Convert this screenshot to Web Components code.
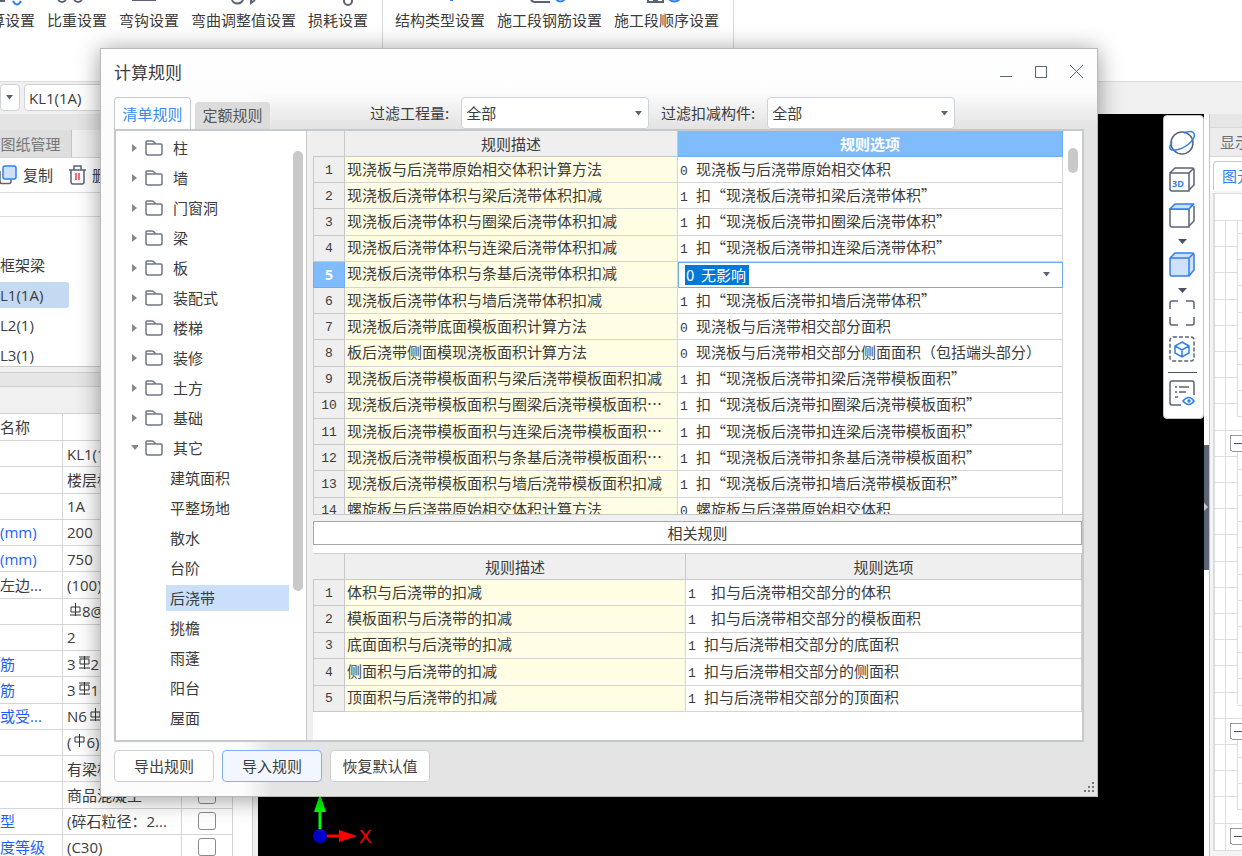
<!DOCTYPE html>
<html lang="zh-CN">
<head>
<meta charset="utf-8">
<title>计算规则</title>
<style>
  html, body { margin: 0; height: 100%; }
  body {
    --ui: "Noto Sans CJK SC", sans-serif;
    --latin: "Open Sans", "Noto Sans CJK SC", sans-serif;
    --line: #d5d5d5;
    --ink: #3c3c3c;
    --blue: #2f80ed;
    font: 15px/20px var(--ui);
    color: var(--ink);
    overflow: hidden;
    background: #fff;
  }
</style>
</head>
<body>
<app-shell></app-shell>

<script>
function define(name, html, setup) {
  const template = document.createElement('template');
  template.innerHTML = `<style>
    *, *::before, *::after { box-sizing: border-box; }
    button, select, input { font: inherit; color: inherit; margin: 0; }
    svg { display: block; flex: none; fill: none; stroke: #5b6474; stroke-width: 1.5; }
  </style>` + html;
  customElements.define(name, class extends HTMLElement {
    constructor() {
      super();
      this.attachShadow({ mode: 'open' }).append(template.content.cloneNode(true));
    }
    connectedCallback() { if (setup) setup(this.shadowRoot, this); }
  });
}

/* ---------- shared controls ---------- */

define('combo-box', `
<style>
  :host { display: flex; align-items: center; }
  label { white-space: nowrap; margin-right: 12px; }
  .box { flex: 1; display: grid; align-items: center; height: 100%; }
  select {
    grid-area: 1 / 1; width: 100%; height: 100%; appearance: none; outline: none;
    border: 1px solid #cfd2d6; border-radius: 4px; background: #fff; padding: 0 4px;
  }
  svg { grid-area: 1 / 1; justify-self: end; margin-right: 7px; fill: #5b6474; stroke: none; pointer-events: none; }
</style>
<label for="s"></label>
<div class="box">
  <select id="s"><option></option></select>
  <svg width="7" height="5"><path d="M0 0h7L3.500 4.500z"/></svg>
</div>`, (root, host) => {
  const label = root.querySelector('label');
  label.textContent = host.getAttribute('label') || '';
  if (!label.textContent) { label.remove(); root.querySelector('select').ariaLabel = host.getAttribute('name') || '选择'; }
  root.querySelector('option').textContent = host.getAttribute('value') || '';
});

define('tool-button', `
<style>
  :host { display: block; }
  button { width: 100%; height: 100%; border: 1px solid #cfcfcf; border-radius: 4px; background: #fff; padding: 0; }
  :host([primary]) button { border-color: #84aef5; background: #f2f7ff; }
</style>
<button type="button"><slot></slot></button>`);

/* ---------- ribbon and context bar ---------- */

define('ribbon-item', `
<style>
  :host { display: block; }
  button { display: flex; flex-direction: column; align-items: center; border: 0; background: none; padding: 0; white-space: nowrap; }
  .pic { height: 10px; }
</style>
<button type="button"><span class="pic"><slot name="icon"></slot></span><span><slot></slot></span></button>`);

define('app-ribbon', `
<style>
  :host { display: flex; height: 82px; background: #fff; overflow: hidden; border-bottom: 1px solid #dcdcdc; }
  section { display: flex; gap: 12px; padding: 0 14px 0 12px; border-right: 1px solid #d9d9d9; }
  .first { margin-left: -22px; }
  .b { stroke: var(--blue); }
  svg { stroke-width: 2; }
</style>
<section class="first">
  <ribbon-item><svg slot="icon" width="45" height="6"><path d="M8 1h7"/><path class="b" d="M23 1q4 7 8 0"/></svg>算设置</ribbon-item>
  <ribbon-item><svg slot="icon" width="60" height="6"><path d="M11 -2a4 4 0 0 0 8 0M27 -2a4 4 0 0 0 8 0"/></svg>比重设置</ribbon-item>
  <ribbon-item><svg slot="icon" width="60" height="6"><path d="M13 0h24"/></svg>弯钩设置</ribbon-item>
  <ribbon-item><svg slot="icon" width="105" height="6"><path d="M41 -1a5 4 0 0 0 11 0M60 0v3l4-3"/></svg>弯曲调整值设置</ribbon-item>
  <ribbon-item><svg slot="icon" width="60" height="6"><circle cx="40" cy="1" r="4"/></svg>损耗设置</ribbon-item>
</section>
<section>
  <ribbon-item><svg slot="icon" width="90" height="6"><path class="b" d="M55 0h3"/></svg>结构类型设置</ribbon-item>
  <ribbon-item><svg slot="icon" width="105" height="6"><path d="M34 -2q0 4 4 4h15"/><path class="b" d="M59 -1q4 5 9 0"/></svg>施工段钢筋设置</ribbon-item>
  <ribbon-item><svg slot="icon" width="105" height="6"><path d="M34 -1v3h15v-3M39 0h5"/><path class="b" d="M55 -1q5 5 11 0"/></svg>施工段顺序设置</ribbon-item>
</section>`);

define('context-bar', `
<style>
  :host { display: flex; gap: 4px; height: 32px; padding: 2px 0 3px; background: #f0f0f0; font-family: var(--latin); }
  .storey { width: 20px; }
  .member { width: 140px; }
</style>
<combo-box class="storey" name="楼层"></combo-box>
<combo-box class="member" name="构件" value="KL1(1A)"></combo-box>`);

/* ---------- left panel ---------- */

define('component-list', `
<style>
  :host { display: block; font-family: var(--latin); background: #fff; border-bottom: 1px solid #c9c9c9; }
  .tabs { display: flex; height: 28px; background: #f0f0f0; border-bottom: 1px solid #d5d5d5; }
  .tabs button { border: 0; border-right: 1px solid #c4c4c4; background: #dedede; color: #777; width: 72px; padding: 0 10px 0 0; }
  .tools { display: flex; align-items: center; height: 35px; gap: 16px; border-bottom: 1px solid #dcdcdc; }
  .tools button { display: flex; align-items: center; gap: 6px; border: 0; background: none; padding: 0; white-space: nowrap; }
  .search { height: 24px; border-bottom: 1px solid #dcdcdc; }
  ul { list-style: none; margin: 0; padding: 35px 0 0; }
  li { height: 26px; line-height: 26px; margin-bottom: 4px; width: 69px; white-space: nowrap; }
  li:last-child { margin-bottom: 0; height: 22px; }
  li[aria-selected] { background: #c3daf2; border-radius: 0 3px 3px 0; }
</style>
<div class="tabs"><button type="button">图纸管理</button></div>
<div class="tools">
  <button type="button"><svg width="17" height="20"><path d="M0 6v11q0 1.500 2 1.500h7q2 0 2-2v-2"/><rect x="3" y="1" width="13" height="13" rx="2" fill="#cfe1fa" stroke="#2f80ed"/></svg>复制</button>
  <button type="button"><svg width="17" height="20"><path d="M0 5h17M5 5V1h7v4M2 5v12q0 2 2 2h9q2 0 2-2V5"/><path d="M7 8v7M10 8v7" stroke="#e04050"/></svg>删除</button>
</div>
<div class="search"></div>
<ul role="listbox" aria-label="构件">
  <li role="option">框架梁</li>
  <li role="option" aria-selected="true">L1(1A)</li>
  <li role="option">L2(1)</li>
  <li role="option">L3(1)</li>
</ul>`);

const bar = (top) => `<svg width="13" height="13" viewBox="0 0 13 13"><path d="M6.500 0v13M2 ${top ? 3 : 4}h9v5H2z${top === 2 ? 'M1 1h11' : ''}${top === 3 ? '' : 'M1 12h11'}" stroke="#333" stroke-width="1"/></svg>`;

const properties = [
  ['', 'KL1(1A)'], ['', '楼层框架梁'], ['', '1A'], ['(mm)', '200', 1], ['(mm)', '750', 1],
  ['左边...', '(100)'], ['', bar(0) + '8@100'], ['', '2'], ['筋', '3' + bar(2) + '20', 1],
  ['筋', '3' + bar(2) + '16', 1], ['或受...', 'N6' + bar(0) + '12', 1], ['', '(' + bar(3) + '6)'],
  ['', '有梁板'], ['', '商品混凝土'], ['型', '(碎石粒径：2...', 1], ['度等级', '(C30)', 1]
];

define('property-table', `
<style>
  :host { display: block; font-family: var(--latin); background: #fff; border-right: 1px solid #d0d0d0; }
  table { table-layout: fixed; border-collapse: separate; border-spacing: 0; width: 233px; height: 447px; }
  thead th { height: 27px; }
  th, td { padding: 0 0 0 4px; border: 0 solid var(--line); border-width: 0 1px 1px 0; font-weight: 400; white-space: nowrap; overflow: hidden; text-align: left; }
  th:first-child, td:first-child { padding: 0; }
  th.mid { text-align: center; }
  .key { color: #1f5fff; }
  svg { display: inline-block; margin-left: 2px; vertical-align: 1px; }
  input { display: block; margin: auto; appearance: none; width: 18px; height: 18px; border: 1px solid #8a8a8a; border-radius: 3px; background: #fff; }
  td:last-child { padding: 0; }
</style>
<table>
  <colgroup><col style="width:63px"><col style="width:119px"><col style="width:51px"></colgroup>
  <thead><tr><th>名称</th><th class="mid">属性值</th><th></th></tr></thead>
  <tbody></tbody>
</table>`, (root) => {
  root.querySelector('tbody').innerHTML = properties.map(([k, v, key]) =>
    `<tr><td class="${key ? 'key' : ''}">${k}</td><td>${v}</td><td><input type="checkbox" aria-label="附加"></td></tr>`).join('');
});

define('side-panel', `
<style>
  :host { display: flex; flex-direction: column; width: 258px; padding-right: 5px; background: #f0f0f0; overflow: hidden; }
  .caption { flex: none; height: 16px; background: #e4e4e4; }
  .split { flex: none; height: 15px; margin-top: 5px; background: #e6e6e6; border: 1px solid #d0d0d0; border-width: 1px 0; }
  .gap { flex: none; height: 27px; border-bottom: 1px solid var(--line); }
  component-list { flex: none; height: 237px; }
</style>
<div class="caption"></div>
<component-list></component-list>
<div class="split"></div>
<div class="gap"></div>
<property-table></property-table>`);

/* ---------- model canvas ---------- */

define('view-toolbar', `
<style>
  :host { display: flex; flex-direction: column; align-items: center; width: 41px; padding: 14px 3px 2px 0; background: #fff; border: 1px solid #c4c4c4; border-radius: 4px; }
  button { border: 0; background: none; padding: 0; height: 26px; margin-bottom: 10px; }
  .menu { margin-bottom: 8px; }
  .arrow { height: 10px; margin-bottom: 5px; display: grid; place-items: center; }
  .arrow svg { fill: #4a5262; stroke: none; }
  .blue { stroke: #2f80ed; }
  hr { width: 29px; border: 0; border-top: 1px solid #4a5262; margin: 0 0 7px; }
  text { font: 700 9px/10px "Open Sans", sans-serif; fill: #2f80ed; stroke: none; }
</style>
<button type="button" aria-label="动态观察"><svg width="28" height="26"><circle cx="14" cy="13" r="11"/><path class="blue" d="M4 12C-1 20 3 21 10 19.500C20 17 28 8 26 3.500C25 1 20 1 16 3"/></svg></button>
<button type="button" aria-label="三维"><svg width="26" height="26"><path d="M1 7h19v18H3q-2 0-2-2zM1 7l5-5h17q2 0 2 2v15l-5 5M20 7l5-5"/><text x="3" y="21">3D</text></svg></button>
<button type="button" class="menu" aria-label="俯视"><svg width="26" height="26"><path d="M1 7h19v18H3q-2 0-2-2zM25 4v15l-5 5"/><path class="blue" fill="#cfe1fa" d="M1 7l5-5h18l-4 5zM20 7l5-5"/></svg></button>
<button type="button" class="arrow" aria-label="更多视图"><svg width="9" height="5"><path d="M0 0h9L4.500 5z"/></svg></button>
<button type="button" class="menu" aria-label="着色"><svg width="26" height="26"><path class="blue" fill="#cfe1fa" d="M1 7l5-5h17q2 0 2 2v15l-5 6H3q-2 0-2-2zM1 7h19v18M20 7l5-5"/></svg></button>
<button type="button" class="arrow" aria-label="更多样式"><svg width="9" height="5"><path d="M0 0h9L4.500 5z"/></svg></button>
<button type="button" aria-label="全屏"><svg width="26" height="26"><path d="M1 9V3q0-2 2-2h6M17 1h6q2 0 2 2v6M25 17v6q0 2-2 2h-6M9 25H3q-2 0-2-2v-6"/></svg></button>
<button type="button" aria-label="隔离"><svg width="26" height="26"><rect x="1" y="1" width="24" height="24" rx="3" stroke-dasharray="4 2"/><path class="blue" d="M13 6l7 4v7l-7 4-7-4v-7zM6 10l7 4 7-4M13 14v7"/></svg></button>
<hr>
<button type="button" aria-label="显示设置"><svg width="26" height="26"><path d="M12 25H3q-2 0-2-2V3q0-2 2-2h20q2 0 2 2v12M6 7h2M10 7h10M6 12h2M10 12h7M6 17h3"/><path class="blue" fill="#fff" d="M14 21q6-7 11 0q-5 7-11 0z"/><circle class="blue" cx="20" cy="21" r="1"/></svg></button>`);

define('model-canvas', `
<style>
  :host { display: block; position: relative; background: #000; overflow: hidden; }
  view-toolbar { position: absolute; top: 1px; right: 0; }
  .axis { position: absolute; left: 53px; bottom: 6px; }
  text { font: 19px/20px "Liberation Sans", sans-serif; fill: #f00; stroke: none; }
</style>
<svg class="axis" width="64" height="60" stroke-width="2">
  <path d="M9 42V20" stroke="#0f0" stroke-width="3"/><path d="M9 4l6 18H3z" fill="#0f0" stroke="none"/>
  <path d="M14 46h16" stroke="#f00" stroke-width="3"/><path d="M46 46l-18 6V40z" fill="#f00" stroke="none"/>
  <circle cx="9" cy="46" r="7" fill="#00c" stroke="none"/><text x="48" y="53">X</text>
</svg>
<view-toolbar></view-toolbar>`);

define('panel-splitter', `
<style>
  :host { display: flex; flex-direction: column; justify-content: center; background: #fff; width: 6px; border-right: 1px solid #c4c4c4; }
  button { border: 0; padding: 0; width: 5px; height: 125px; margin-top: 44px; background: #5b6474; }
  svg { fill: #c8ccd2; stroke: none; }
</style>
<button type="button" aria-label="折叠"><svg width="4" height="8"><path d="M0 0l4 4-4 4z"/></svg></button>`);

/* ---------- right panel ---------- */

define('display-panel', `
<style>
  :host { display: flex; flex-direction: column; width: 32px; background: #f4f4f4; overflow: hidden; white-space: nowrap; }
  .caption { flex: none; height: 14px; background: #e6e6e6; border-bottom: 1px solid #d9d9d9; }
  .title { flex: none; height: 29px; padding: 4px 0 0 10px; color: #707070; background: #ececec; border-bottom: 1px solid #d5d5d5; }
  .tabs { flex: none; height: 34px; padding: 4px 0 0 3px; background: #fff; border-bottom: 1px solid #fff; }
  .tabs button { width: 60px; height: 29px; border: 1px solid #c4c8cc; border-bottom: 0; border-radius: 4px 0 0 0; background: #fff; color: var(--blue); padding: 0 0 0 8px; text-align: left; }
  .body { flex: 1; margin: 2px 0 5px 3px; border: 1px solid #dcdcdc; border-width: 1px 0 1px 2px; background: #fff; }
  svg { stroke-width: 1; }
</style>
<div class="caption"></div>
<div class="title">显示设置</div>
<div class="tabs"><button type="button">图元显示</button></div>
<div class="body"><svg width="28" height="656" shape-rendering="crispEdges"></svg></div>`, (root) => {
  // Rows share one pitch; each group is headed by an expander box.
  const y = (n) => Math.round(26 + n * 26.2);
  const heads = [8, 19, 23];
  let grey = 'M10 26V656M0 26h28';
  let marks = '';
  let boxes = '';
  for (let n = 1; n < 24; n++) {
    const head = heads.includes(n);
    grey += `M0 ${y(n)}h${head ? 28 : 22}`;
    if (!head) grey += `M22 ${y(n) + 13}h6`;
  }
  grey += 'M22 39h6M22 26V222M22 257V510M22 546V615';
  heads.forEach((n) => {
    const t = y(n) + 5;
    boxes += `<rect x="15" y="${t}" width="16" height="16" rx="2" fill="#fff" stroke="#999"/>`;
    marks += `M19 ${t + 8}h8`;
  });
  root.querySelector('svg').innerHTML = `<path d="${grey}" stroke="#dedede"/>${boxes}<path d="${marks}" stroke="#4a5262"/>`;
});

/* ---------- rule tree ---------- */

define('tree-node', `
<style>
  :host { display: flex; align-items: center; height: 30px; padding-left: 15px; line-height: 26px; }
  .arrow { fill: #888; stroke: none; }
  .folder { margin: 0 10px 0 7px; stroke: #6f7786; }
  .text { flex: 1; }
  :host([leaf]) { padding-left: 50px; }
  :host([leaf]) svg { display: none; }
  :host([leaf]) .text { padding-left: 4px; }
  :host([selected]) .text { background: #c9dffa; }
</style>
<svg class="arrow" width="7" height="8"></svg>
<svg class="folder" width="18" height="16"><path d="M1 13V2q0-1 1-1h5q1 0 2 1l2 2h5q1 0 1 1v8q0 2-2 2H3q-2 0-2-2zM1 4h9"/></svg>
<span class="text"><slot></slot></span>`, (root, host) => {
  root.querySelector('.arrow').innerHTML = host.hasAttribute('open') ? '<path d="M0 1h8L4 6z"/>' : '<path d="M1 0l5 4-5 4z"/>';
});

define('rule-tree', `
<style>
  :host { display: flex; background: #fff; padding: 2px 3px 0 0; }
  .nodes { flex: 1; }
  .bar { width: 10px; height: 440px; margin: 18px 0 0 4px; border-radius: 5px; background: #c9c9c9; }
</style>
<div class="nodes" role="tree" aria-label="构件类型"></div>
<div class="bar"></div>`, (root) => {
  const folders = ['柱', '墙', '门窗洞', '梁', '板', '装配式', '楼梯', '装修', '土方', '基础'];
  const leaves = ['建筑面积', '平整场地', '散水', '台阶', '后浇带', '挑檐', '雨蓬', '阳台', '屋面'];
  root.querySelector('.nodes').innerHTML =
    folders.map((t) => `<tree-node role="treeitem">${t}</tree-node>`).join('') +
    '<tree-node role="treeitem" open>其它</tree-node>' +
    leaves.map((t) => `<tree-node role="treeitem" leaf ${t === '后浇带' ? 'selected' : ''}>${t}</tree-node>`).join('');
});

/* ---------- rule tables ---------- */

const ruleSets = {
  main: [
    ['现浇板与后浇带原始相交体积计算方法', '0', '现浇板与后浇带原始相交体积'],
    ['现浇板后浇带体积与梁后浇带体积扣减', '1', '扣“现浇板后浇带扣梁后浇带体积”'],
    ['现浇板后浇带体积与圈梁后浇带体积扣减', '1', '扣“现浇板后浇带扣圈梁后浇带体积”'],
    ['现浇板后浇带体积与连梁后浇带体积扣减', '1', '扣“现浇板后浇带扣连梁后浇带体积”'],
    ['现浇板后浇带体积与条基后浇带体积扣减', '0', '无影响', 'edit'],
    ['现浇板后浇带体积与墙后浇带体积扣减', '1', '扣“现浇板后浇带扣墙后浇带体积”'],
    ['现浇板后浇带底面模板面积计算方法', '0', '现浇板与后浇带相交部分面积'],
    ['板后浇带侧面模现浇板面积计算方法', '0', '现浇板与后浇带相交部分侧面面积（包括端头部分）'],
    ['现浇板后浇带模板面积与梁后浇带模板面积扣减', '1', '扣“现浇板后浇带扣梁后浇带模板面积”'],
    ['现浇板后浇带模板面积与圈梁后浇带模板面积…', '1', '扣“现浇板后浇带扣圈梁后浇带模板面积”'],
    ['现浇板后浇带模板面积与连梁后浇带模板面积…', '1', '扣“现浇板后浇带扣连梁后浇带模板面积”'],
    ['现浇板后浇带模板面积与条基后浇带模板面积…', '1', '扣“现浇板后浇带扣条基后浇带模板面积”'],
    ['现浇板后浇带模板面积与墙后浇带模板面积扣减', '1', '扣“现浇板后浇带扣墙后浇带模板面积”'],
    ['螺旋板与后浇带原始相交体积计算方法', '0', '螺旋板与后浇带原始相交体积']
  ],
  related: [
    ['体积与后浇带的扣减', '1', '扣与后浇带相交部分的体积', 'wide'],
    ['模板面积与后浇带的扣减', '1', '扣与后浇带相交部分的模板面积', 'wide'],
    ['底面面积与后浇带的扣减', '1', '扣与后浇带相交部分的底面积'],
    ['侧面积与后浇带的扣减', '1', '扣与后浇带相交部分的侧面积'],
    ['顶面积与后浇带的扣减', '1', '扣与后浇带相交部分的顶面积']
  ]
};

define('rule-grid', `
<style>
  :host { display: flex; align-items: flex-start; background: #fff; overflow: hidden; }
  table { flex: 1; table-layout: fixed; border-collapse: separate; border-spacing: 0; width: 100%; height: var(--grid-height); }
  .num { width: 32px; }
  .desc { width: var(--desc-width); }
  th, td { padding: 0 0 0 2px; border: 0 solid #d4d4d4; border-width: 0 1px 1px 0; font-weight: 400; white-space: nowrap; overflow: hidden; }
  td { padding-bottom: 2px; }
  th { background: #efefef; padding: 0; border-color: #c8c8c8; }
  thead th { height: 26px; }
  tbody th { font: 13px/20px "Liberation Mono", monospace; border-left-width: 1px; padding-top: 2px; }
  td:nth-child(2) { background: #fffde3; }
  i { display: inline-block; width: 16px; font: 13px/12px "Liberation Mono", monospace; }
  i.wide { width: 23px; }
  thead th.active { background: #80bbfb; border-color: #6fadf0; color: #fff; font-weight: 700; }
  tbody tr.edit th { background: #80bbfb; border-color: #6fadf0; color: #fff; font: 700 14px/20px "Open Sans", sans-serif; }
  tr.edit td:last-child { border: 1px solid #6fadf0; padding: 0 12px 0 6px; }
  .edit div { display: flex; align-items: center; justify-content: space-between; }
  input { width: 64px; height: 20px; border: 0; outline: 0; padding: 0 1px; background: #0078d7; color: #fff; }
  .edit svg { fill: #5b6474; stroke: none; }
  .bar { flex: none; width: 10px; height: 25px; margin: 17px 4px 0 5px; border-radius: 5px; background: #c9c9c9; }
  :host(:not([scroll])) .bar { display: none; }
</style>
<table>
  <colgroup><col class="num"><col class="desc"><col></colgroup>
  <thead><tr><th></th><th>规则描述</th><th class="opt">规则选项</th></tr></thead>
  <tbody></tbody>
</table>
<div class="bar"></div>`, (root, host) => {
  const rows = ruleSets[host.getAttribute('rules')];
  if (host.hasAttribute('scroll')) root.querySelector('.opt').classList.add('active');
  root.querySelector('tbody').innerHTML = rows.map(([desc, code, option, kind = ''], n) => {
    const cell = kind === 'edit'
      ? `<div><input aria-label="规则选项" value="${code}  ${option}"><svg width="7" height="5"><path d="M0 0h7L3.500 4.500z"/></svg></div>`
      : `<i class="${kind}">${code}</i>${option}`;
    return `<tr class="${kind}"><th scope="row">${n + 1}</th><td>${desc}</td><td>${cell}</td></tr>`;
  }).join('');
});

/* ---------- dialog ---------- */

define('calc-dialog', `
<style>
  :host {
    display: flex; flex-direction: column; padding: 0 13px; border: 1px solid #b9b9b9;
    background:
      linear-gradient(to bottom, #fff 0, #fdfdfd 42px, #fdfdfd00 78px),
      linear-gradient(to right, #fcfcfc 0, #fcfcfc 142px, #e4e4e4 172px);
    box-shadow: 0 2px 22px rgba(0, 0, 0, .4);
  }
  header { display: flex; align-items: center; justify-content: space-between; height: 48px; padding-bottom: 2px; }
  h1 { margin: 0; font-size: 17px; line-height: 24px; font-weight: 400; }
  .window { display: flex; gap: 21px; }
  .window button { border: 0; background: none; padding: 0; }
  .window svg { stroke-width: 1; }
  .top { display: flex; align-items: flex-start; height: 32px; }
  .tabs { display: flex; align-items: flex-end; gap: 4px; height: 32px; flex: 1; }
  .tabs button { border: 1px solid #c4c8cc; border-bottom: 0; border-radius: 4px 4px 0 0; height: 32px; width: 77px; padding: 0; background: #fff; color: #3a8ae8; }
  .tabs button + button { border: 0; height: 27px; width: 75px; padding-bottom: 2px; background: #dcdcdc; color: #555; }
  .filters { display: flex; gap: 12px; padding-right: 129px; }
  combo-box { height: 32px; }
  .f1 { width: 279px; }
  .f2 { width: 294px; }
  .frame { flex: 1; min-height: 0; display: flex; border: 2px solid #c6c9cc; }
  rule-tree { flex: none; width: 190px; }
  .split { flex: none; width: 7px; background: #f0f0f0; border-left: 1px solid #c8c8c8; }
  .right { flex: 1; min-width: 0; display: flex; flex-direction: column; background: #fff; }
  .main { flex: none; height: 384px; border-bottom: 1px solid #c8c8c8; --grid-height: 393px; --desc-width: 333px; }
  .hsplit { flex: none; height: 6px; background: #f0f0f0; }
  h2 { flex: none; margin: 0 0 8px; height: 24px; font-size: 15px; line-height: 22px; font-weight: 400; text-align: center; border: 1px solid #a8a8a8; }
  .related { flex: 1; border-top: 1px solid #d0d0d0; --grid-height: 158px; --desc-width: 341px; }
  footer { display: flex; gap: 8px; height: 54px; padding-top: 8px; position: relative; }
  footer tool-button { width: 100px; height: 32px; }
  .grip { position: absolute; right: -11px; bottom: 3px; fill: #777; stroke: none; }
</style>
<header>
  <h1>计算规则</h1>
  <div class="window">
    <button type="button" aria-label="最小化"><svg width="13" height="14"><path d="M0 11.500h12"/></svg></button>
    <button type="button" aria-label="最大化"><svg width="14" height="14"><path d="M1.500 1.500h11v11h-11z"/></svg></button>
    <button type="button" aria-label="关闭"><svg width="15" height="14"><path d="M1 0l13 13M14 0L1 13"/></svg></button>
  </div>
</header>
<div class="top">
  <div class="tabs"><button type="button">清单规则</button><button type="button">定额规则</button></div>
  <div class="filters">
    <combo-box class="f1" label="过滤工程量:" value="全部"></combo-box>
    <combo-box class="f2" label="过滤扣减构件:" value="全部"></combo-box>
  </div>
</div>
<div class="frame">
  <rule-tree></rule-tree>
  <div class="split"></div>
  <div class="right">
    <rule-grid class="main" rules="main" scroll></rule-grid>
    <div class="hsplit"></div>
    <h2>相关规则</h2>
    <rule-grid class="related" rules="related"></rule-grid>
  </div>
</div>
<footer>
  <tool-button>导出规则</tool-button>
  <tool-button primary>导入规则</tool-button>
  <tool-button>恢复默认值</tool-button>
  <svg class="grip" width="11" height="11"><path d="M8 0h2v2H8zM4 4h2v2H4zM8 4h2v2H8zM0 8h2v2H0zM4 8h2v2H4zM8 8h2v2H8z"/></svg>
</footer>`);

define('app-shell', `
<style>
  :host { display: flex; flex-direction: column; height: 100vh; position: relative; overflow: hidden; }
  app-ribbon, context-bar { flex: none; }
  main { flex: 1; min-height: 0; display: flex; }
  side-panel, panel-splitter, display-panel { flex: none; }
  model-canvas { flex: 1; }
  calc-dialog { position: absolute; inset: 48px 144px 59px 100px; }
</style>
<app-ribbon></app-ribbon>
<context-bar></context-bar>
<main>
  <side-panel></side-panel>
  <model-canvas></model-canvas>
  <panel-splitter></panel-splitter>
  <display-panel></display-panel>
</main>
<calc-dialog role="dialog" aria-label="计算规则"></calc-dialog>`);
</script>
</body>
</html>
